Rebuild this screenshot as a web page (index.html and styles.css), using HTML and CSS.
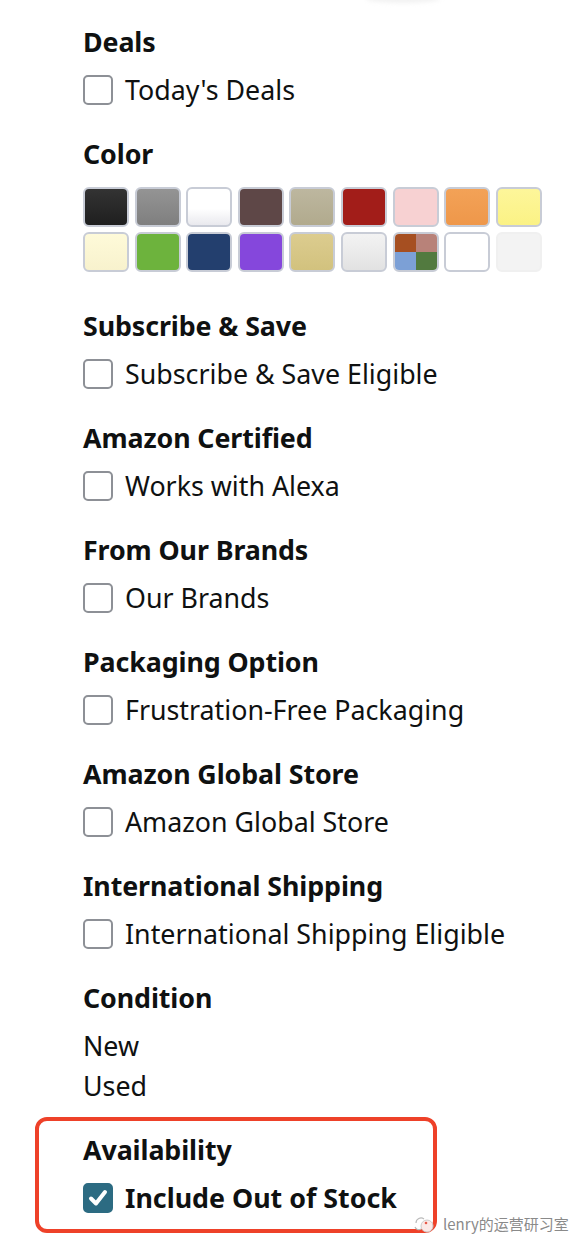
FILE: index.html
```html
<!DOCTYPE html>
<html lang="en">
<head>
<meta charset="utf-8">
<title>Filters</title>
<link rel="stylesheet" href="styles.css">
</head>
<body>
<div class="top-shadow"></div>
<div class="filters">
  <section class="group">
    <h3 class="title">Deals</h3>
    <label class="item"><span class="box"></span><span class="text">Today's Deals</span></label>
  </section>

  <section class="group color-group">
    <h3 class="title">Color</h3>
    <div class="swatches">
      <span class="sw sw-black"></span>
      <span class="sw sw-gray"></span>
      <span class="sw sw-white"></span>
      <span class="sw sw-brown"></span>
      <span class="sw sw-khaki"></span>
      <span class="sw sw-red"></span>
      <span class="sw sw-pink"></span>
      <span class="sw sw-orange"></span>
      <span class="sw sw-yellow"></span>
      <span class="sw sw-cream"></span>
      <span class="sw sw-green"></span>
      <span class="sw sw-navy"></span>
      <span class="sw sw-purple"></span>
      <span class="sw sw-gold"></span>
      <span class="sw sw-silver"></span>
      <span class="sw sw-multi"><i class="q q1"></i><i class="q q2"></i><i class="q q3"></i><i class="q q4"></i></span>
      <span class="sw sw-white2"></span>
      <span class="sw sw-clear"></span>
    </div>
  </section>

  <section class="group">
    <h3 class="title">Subscribe &amp; Save</h3>
    <label class="item"><span class="box"></span><span class="text">Subscribe &amp; Save Eligible</span></label>
  </section>

  <section class="group">
    <h3 class="title">Amazon Certified</h3>
    <label class="item"><span class="box"></span><span class="text">Works with Alexa</span></label>
  </section>

  <section class="group">
    <h3 class="title">From Our Brands</h3>
    <label class="item"><span class="box"></span><span class="text">Our Brands</span></label>
  </section>

  <section class="group">
    <h3 class="title">Packaging Option</h3>
    <label class="item"><span class="box"></span><span class="text">Frustration-Free Packaging</span></label>
  </section>

  <section class="group">
    <h3 class="title">Amazon Global Store</h3>
    <label class="item"><span class="box"></span><span class="text">Amazon Global Store</span></label>
  </section>

  <section class="group">
    <h3 class="title">International Shipping</h3>
    <label class="item"><span class="box"></span><span class="text">International Shipping Eligible</span></label>
  </section>

  <section class="group">
    <h3 class="title">Condition</h3>
    <div class="link">New</div>
    <div class="link">Used</div>
  </section>

  <section class="group highlight">
    <h3 class="title">Availability</h3>
    <label class="item checked"><span class="box">
      <svg viewBox="0 0 24 24" width="24" height="24" aria-hidden="true"><path d="M5 12.5 L10 17.5 L19 6" fill="none" stroke="#fff" stroke-width="4" stroke-linecap="round" stroke-linejoin="round"/></svg>
    </span><span class="text">Include Out of Stock</span></label>
  </section>
</div>
<div class="watermark">
  <svg class="wm-icon" viewBox="0 0 22 22" width="22" height="22" aria-hidden="true">
    <path d="M3 11 a5 5 0 0 1 8 -4" fill="none" stroke="#bbb" stroke-width="1.2"/>
    <path d="M2 15 a4 4 0 0 0 6 2" fill="none" stroke="#bbb" stroke-width="1.2"/>
    <circle cx="14" cy="14" r="6" fill="#fbe9e7" stroke="#ccc" stroke-width="1"/>
    <circle cx="13" cy="11" r="1.3" fill="#e65a4a"/>
  </svg>
  <span class="wm-text">lenry的运营研习室</span>
</div>
</body>
</html>
```

FILE: styles.css
```css
html, body {
  margin: 0;
  padding: 0;
  background: #ffffff;
}

body {
  position: relative;
  width: 582px;
  height: 1250px;
  overflow: hidden;
  font-family: "Noto Sans", "Open Sans", Arial, sans-serif;
  color: #0f1111;
}

.top-shadow {
  position: absolute;
  left: 366px;
  top: -5px;
  width: 74px;
  height: 8px;
  border-radius: 50%;
  background: #f2f2f2;
  filter: blur(2px);
}

.filters {
  padding: 22px 0 0 83px;
}

.group {
  margin: 0 0 24px 0;
}

.title {
  margin: 0 0 8px 0;
  height: 40px;
  line-height: 40px;
  font-size: 26.8px;
  font-weight: 700;
  letter-spacing: -0.1px;
}

.item {
  display: flex;
  align-items: center;
  gap: 12px;
  height: 40px;
  font-size: 26.8px;
}

.box {
  box-sizing: border-box;
  width: 30px;
  height: 30px;
  border: 2px solid #8d9096;
  border-radius: 5px;
  background: #fff;
  display: flex;
  align-items: center;
  justify-content: center;
  flex: none;
}

.text {
  line-height: 40px;
}

.link {
  height: 40px;
  line-height: 40px;
  font-size: 26.8px;
}

.checked .box {
  background: #2c6b82;
  border-color: #2c6b82;
}

.checked .text {
  font-weight: 700;
}

.color-group .title {
  margin-bottom: 13px;
}

.color-group {
  margin-bottom: 34px;
}

.swatches {
  display: grid;
  grid-template-columns: repeat(9, 46px);
  grid-auto-rows: 40px;
  column-gap: 5.6px;
  row-gap: 5px;
}

.sw {
  box-sizing: border-box;
  display: block;
  border: 2px solid #c8ccd6;
  border-radius: 6px;
  overflow: hidden;
}

.sw-black { background: linear-gradient(#333, #1f1f1f); }
.sw-gray { background: linear-gradient(#949494, #7f7f7f); }
.sw-white { background: linear-gradient(#ffffff 55%, #e9e9ee); }
.sw-brown { background: #5e4747; }
.sw-khaki { background: linear-gradient(#bdb79f, #b1aa8d); }
.sw-red { background: #a21d19; }
.sw-pink { background: #f7d1d2; }
.sw-orange { background: linear-gradient(#f3a257, #ee974a); }
.sw-yellow { background: linear-gradient(#fdf69a, #fbf285); }
.sw-cream { background: linear-gradient(#fefad9, #f8f2cd); }
.sw-green { background: #6db33d; }
.sw-navy { background: #233f6e; }
.sw-purple { background: #8547dc; }
.sw-gold { background: linear-gradient(#dccc8f, #d2c27e); }
.sw-silver { background: linear-gradient(#f3f3f3, #e2e2e2); }
.sw-white2 { background: #fff; }
.sw-clear { background: #f3f3f3; border-color: #f0f0f0; }

.sw-multi {
  display: grid;
  grid-template-columns: 1fr 1fr;
  grid-template-rows: 1fr 1fr;
}
.q { display: block; }
.q1 { background: #a64f21; }
.q2 { background: #b88279; }
.q3 { background: #7ca0d6; }
.q4 { background: #527a3f; }

.highlight {
  box-sizing: border-box;
  margin: 0 0 0 -48px;
  width: 402px;
  padding: 9px 0 11px 44px;
  border: 4px solid #ee4129;
  border-radius: 12px;
  position: relative;
  top: -13px;
}

.highlight .title {
  margin-bottom: 8px;
}

.watermark {
  position: absolute;
  left: 413px;
  top: 1212px;
  display: flex;
  align-items: center;
  gap: 8px;
}

.wm-text {
  font-family: "Noto Sans CJK SC", "Noto Sans", sans-serif;
  font-size: 15px;
  color: #8a8a8a;
  text-shadow: 0 0 2px #fff;
}
```
